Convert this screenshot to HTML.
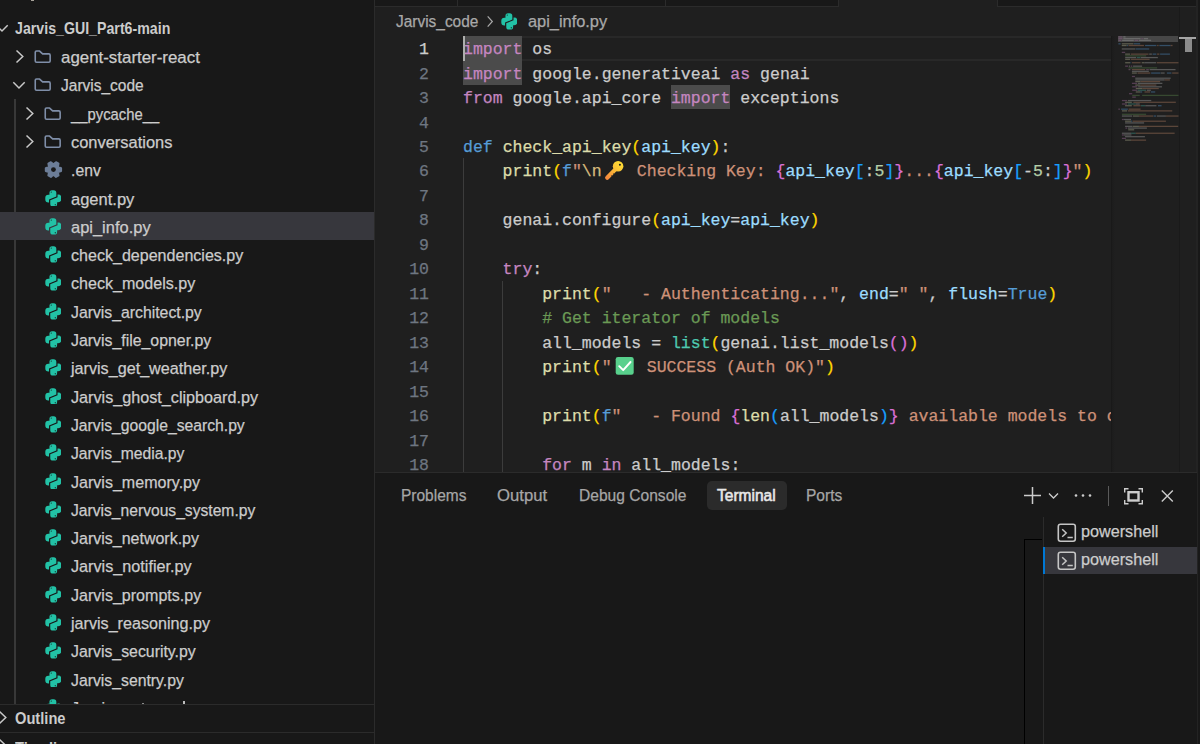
<!DOCTYPE html>
<html><head><meta charset="utf-8">
<style>
*{margin:0;padding:0;box-sizing:border-box}
html,body{width:1200px;height:744px;overflow:hidden;background:#181818}
body{position:relative;font-family:"Liberation Sans",sans-serif;color:#cccccc;-webkit-text-stroke:0.25px currentColor}
.abs{position:absolute}
#side{position:absolute;left:0;top:0;width:374px;height:744px;background:#181818;overflow:hidden}
.row{position:absolute;left:0;width:375px;height:28.3px}
.row.sel{background:#37373d}
.row .t{position:absolute;top:2px;transform-origin:0 0;line-height:28.3px;font-size:16.7px;white-space:nowrap;color:#cccccc}
.ic{position:absolute;display:block;line-height:0}
.py{width:16.7px;height:16.9px;display:block}
.fold{width:18px;height:15px;display:block}
.chev{width:10px;height:16px;display:block}
.chevd{width:16px;height:10px;display:block}
#ed{position:absolute;left:375px;top:0;width:822px;height:472px;background:#1f1f1f;overflow:hidden}
.cl{position:absolute;left:88px;height:24.46px;line-height:24.46px;font-family:"Liberation Mono",monospace;font-size:16.5px;white-space:pre;padding-top:2.2px}
.ln{position:absolute;left:0;width:54px;text-align:right;height:24.46px;line-height:24.46px;font-family:"Liberation Mono",monospace;font-size:16.5px;color:#6e7681;padding-top:2.2px}
.ln.act{color:#cccccc}
.emo{display:inline-block;width:25.3px;height:20px;vertical-align:-4px;position:relative}
.emo svg{display:none}
#panel{position:absolute;left:375px;top:472px;width:822px;height:272px;background:#181818;border-top:1px solid #2b2b2b}
.ptab{position:absolute;top:0;line-height:28px;font-size:16.7px;color:#a6a6a6;white-space:nowrap;transform-origin:0 0}
.mm{position:absolute;height:1.45px;opacity:0.55}
.ti{position:absolute;line-height:0}
</style></head><body>
<div id="side">
  <div class="abs" style="left:30.8px;top:0;width:3.5px;height:1.2px;background:#a8a39a"></div>
  <div class="row" style="top:14px">
    <span class="ic" style="left:-4.7px;top:10px"><svg class="chevd" viewBox="0 0 16 10"><path d="M1.3 1.3L7 7L12.7 1.3" fill="none" stroke="#c8c8c8" stroke-width="1.5"/></svg></span>
    <span class="t" style="left:14.5px;top:1px;font-weight:bold;-webkit-text-stroke:0;transform:scaleX(0.85)">Jarvis_GUI_Part6-main</span>
  </div>
  <div class="abs" style="left:14.4px;top:98.6px;width:1.4px;height:606px;background:#383838"></div>
<div class="row" style="top:42.00px"><span class="ic" style="left:15px;top:7px"><svg class="chev" viewBox="0 0 10 16"><path d="M1.5 1.5L7.8 7.5L1.5 13.5" fill="none" stroke="#c8c8c8" stroke-width="1.5"/></svg></span><span class="ic" style="left:34px;top:7px"><svg class="fold" viewBox="0 0 18 15"><path d="M1.25 3.3Q1.25 2.05 2.5 2.05H5.6L8.6 4.9H14.9Q16.15 4.9 16.15 6.15V12Q16.15 13.25 14.9 13.25H2.5Q1.25 13.25 1.25 12Z" fill="none" stroke="#7f8ea8" stroke-width="1.6" stroke-linejoin="round"/></svg></span><span class="t" style="left:61px;transform:scaleX(1.0116)">agent-starter-react</span></div>
<div class="row" style="top:70.30px"><span class="ic" style="left:11.5px;top:11px"><svg class="chevd" viewBox="0 0 16 10"><path d="M1.3 1.3L7 7L12.7 1.3" fill="none" stroke="#c8c8c8" stroke-width="1.5"/></svg></span><span class="ic" style="left:34px;top:7px"><svg class="fold" viewBox="0 0 18 15"><path d="M1.25 3.3Q1.25 2.05 2.5 2.05H5.6L8.6 4.9H14.9Q16.15 4.9 16.15 6.15V12Q16.15 13.25 14.9 13.25H2.5Q1.25 13.25 1.25 12Z" fill="none" stroke="#7f8ea8" stroke-width="1.6" stroke-linejoin="round"/></svg></span><span class="t" style="left:61px;transform:scaleX(0.9292)">Jarvis_code</span></div>
<div class="row" style="top:98.60px"><span class="ic" style="left:25px;top:7px"><svg class="chev" viewBox="0 0 10 16"><path d="M1.5 1.5L7.8 7.5L1.5 13.5" fill="none" stroke="#c8c8c8" stroke-width="1.5"/></svg></span><span class="ic" style="left:44px;top:7px"><svg class="fold" viewBox="0 0 18 15"><path d="M1.25 3.3Q1.25 2.05 2.5 2.05H5.6L8.6 4.9H14.9Q16.15 4.9 16.15 6.15V12Q16.15 13.25 14.9 13.25H2.5Q1.25 13.25 1.25 12Z" fill="none" stroke="#7f8ea8" stroke-width="1.6" stroke-linejoin="round"/></svg></span><span class="t" style="left:71px;transform:scaleX(0.888)">__pycache__</span></div>
<div class="row" style="top:126.90px"><span class="ic" style="left:25px;top:7px"><svg class="chev" viewBox="0 0 10 16"><path d="M1.5 1.5L7.8 7.5L1.5 13.5" fill="none" stroke="#c8c8c8" stroke-width="1.5"/></svg></span><span class="ic" style="left:44px;top:7px"><svg class="fold" viewBox="0 0 18 15"><path d="M1.25 3.3Q1.25 2.05 2.5 2.05H5.6L8.6 4.9H14.9Q16.15 4.9 16.15 6.15V12Q16.15 13.25 14.9 13.25H2.5Q1.25 13.25 1.25 12Z" fill="none" stroke="#7f8ea8" stroke-width="1.6" stroke-linejoin="round"/></svg></span><span class="t" style="left:71px;transform:scaleX(0.9845)">conversations</span></div>
<div class="row" style="top:155.20px"><span class="ic" style="left:44.8px;top:6px"><svg class="py" style="overflow:visible" viewBox="0 0 16.7 16.9"><path d="M16.20 10.11 L16.20 7.09 L13.04 5.95 L13.63 2.64 L11.02 1.13 L8.45 3.30 L5.88 1.13 L3.27 2.64 L3.86 5.95 L0.70 7.09 L0.70 10.11 L3.86 11.25 L3.27 14.56 L5.88 16.07 L8.45 13.90 L11.02 16.07 L13.63 14.56 L13.04 11.25Z" fill="#6c7d97" stroke="#6c7d97" stroke-width="1.8" stroke-linejoin="round"/><circle cx="8.45" cy="8.6" r="2.4" fill="#181818"/></svg></span><span class="t" style="left:71px;transform:scaleX(0.9438)">.env</span></div>
<div class="row" style="top:183.50px"><span class="ic" style="left:44.8px;top:6px"><svg class="py" viewBox="0 0 16.5 16.7"><path d="M4.4 2.9A2.6 2.6 0 0 1 7 0.3H8.6A2.6 2.6 0 0 1 11.2 2.9V6.5L4 9.5V12.3H3.3A3 3 0 0 1 0.3 9.3V7.6A3 3 0 0 1 3.3 4.6H4.4Z" fill="#22c2a6"/><path d="M4.4 2.9A2.6 2.6 0 0 1 7 0.3H8.6A2.6 2.6 0 0 1 11.2 2.9V6.5L4 9.5V12.3H3.3A3 3 0 0 1 0.3 9.3V7.6A3 3 0 0 1 3.3 4.6H4.4Z" fill="#22c2a6" transform="rotate(180 8.2 8.35)"/><circle cx="6.2" cy="2.1" r="0.65" fill="#181818" fill-opacity="0.8"/><circle cx="10.2" cy="14.6" r="0.65" fill="#181818" fill-opacity="0.8"/></svg></span><span class="t" style="left:71px;transform:scaleX(0.9892)">agent.py</span></div>
<div class="row sel" style="top:211.80px"><span class="ic" style="left:44.8px;top:6px"><svg class="py" viewBox="0 0 16.5 16.7"><path d="M4.4 2.9A2.6 2.6 0 0 1 7 0.3H8.6A2.6 2.6 0 0 1 11.2 2.9V6.5L4 9.5V12.3H3.3A3 3 0 0 1 0.3 9.3V7.6A3 3 0 0 1 3.3 4.6H4.4Z" fill="#22c2a6"/><path d="M4.4 2.9A2.6 2.6 0 0 1 7 0.3H8.6A2.6 2.6 0 0 1 11.2 2.9V6.5L4 9.5V12.3H3.3A3 3 0 0 1 0.3 9.3V7.6A3 3 0 0 1 3.3 4.6H4.4Z" fill="#22c2a6" transform="rotate(180 8.2 8.35)"/><circle cx="6.2" cy="2.1" r="0.65" fill="#181818" fill-opacity="0.8"/><circle cx="10.2" cy="14.6" r="0.65" fill="#181818" fill-opacity="0.8"/></svg></span><span class="t" style="left:71px;transform:scaleX(0.9864)">api_info.py</span></div>
<div class="row" style="top:240.10px"><span class="ic" style="left:44.8px;top:6px"><svg class="py" viewBox="0 0 16.5 16.7"><path d="M4.4 2.9A2.6 2.6 0 0 1 7 0.3H8.6A2.6 2.6 0 0 1 11.2 2.9V6.5L4 9.5V12.3H3.3A3 3 0 0 1 0.3 9.3V7.6A3 3 0 0 1 3.3 4.6H4.4Z" fill="#22c2a6"/><path d="M4.4 2.9A2.6 2.6 0 0 1 7 0.3H8.6A2.6 2.6 0 0 1 11.2 2.9V6.5L4 9.5V12.3H3.3A3 3 0 0 1 0.3 9.3V7.6A3 3 0 0 1 3.3 4.6H4.4Z" fill="#22c2a6" transform="rotate(180 8.2 8.35)"/><circle cx="6.2" cy="2.1" r="0.65" fill="#181818" fill-opacity="0.8"/><circle cx="10.2" cy="14.6" r="0.65" fill="#181818" fill-opacity="0.8"/></svg></span><span class="t" style="left:71px;transform:scaleX(0.9622)">check_dependencies.py</span></div>
<div class="row" style="top:268.40px"><span class="ic" style="left:44.8px;top:6px"><svg class="py" viewBox="0 0 16.5 16.7"><path d="M4.4 2.9A2.6 2.6 0 0 1 7 0.3H8.6A2.6 2.6 0 0 1 11.2 2.9V6.5L4 9.5V12.3H3.3A3 3 0 0 1 0.3 9.3V7.6A3 3 0 0 1 3.3 4.6H4.4Z" fill="#22c2a6"/><path d="M4.4 2.9A2.6 2.6 0 0 1 7 0.3H8.6A2.6 2.6 0 0 1 11.2 2.9V6.5L4 9.5V12.3H3.3A3 3 0 0 1 0.3 9.3V7.6A3 3 0 0 1 3.3 4.6H4.4Z" fill="#22c2a6" transform="rotate(180 8.2 8.35)"/><circle cx="6.2" cy="2.1" r="0.65" fill="#181818" fill-opacity="0.8"/><circle cx="10.2" cy="14.6" r="0.65" fill="#181818" fill-opacity="0.8"/></svg></span><span class="t" style="left:71px;transform:scaleX(0.9636)">check_models.py</span></div>
<div class="row" style="top:296.70px"><span class="ic" style="left:44.8px;top:6px"><svg class="py" viewBox="0 0 16.5 16.7"><path d="M4.4 2.9A2.6 2.6 0 0 1 7 0.3H8.6A2.6 2.6 0 0 1 11.2 2.9V6.5L4 9.5V12.3H3.3A3 3 0 0 1 0.3 9.3V7.6A3 3 0 0 1 3.3 4.6H4.4Z" fill="#22c2a6"/><path d="M4.4 2.9A2.6 2.6 0 0 1 7 0.3H8.6A2.6 2.6 0 0 1 11.2 2.9V6.5L4 9.5V12.3H3.3A3 3 0 0 1 0.3 9.3V7.6A3 3 0 0 1 3.3 4.6H4.4Z" fill="#22c2a6" transform="rotate(180 8.2 8.35)"/><circle cx="6.2" cy="2.1" r="0.65" fill="#181818" fill-opacity="0.8"/><circle cx="10.2" cy="14.6" r="0.65" fill="#181818" fill-opacity="0.8"/></svg></span><span class="t" style="left:71px;transform:scaleX(0.946)">Jarvis_architect.py</span></div>
<div class="row" style="top:325.00px"><span class="ic" style="left:44.8px;top:6px"><svg class="py" viewBox="0 0 16.5 16.7"><path d="M4.4 2.9A2.6 2.6 0 0 1 7 0.3H8.6A2.6 2.6 0 0 1 11.2 2.9V6.5L4 9.5V12.3H3.3A3 3 0 0 1 0.3 9.3V7.6A3 3 0 0 1 3.3 4.6H4.4Z" fill="#22c2a6"/><path d="M4.4 2.9A2.6 2.6 0 0 1 7 0.3H8.6A2.6 2.6 0 0 1 11.2 2.9V6.5L4 9.5V12.3H3.3A3 3 0 0 1 0.3 9.3V7.6A3 3 0 0 1 3.3 4.6H4.4Z" fill="#22c2a6" transform="rotate(180 8.2 8.35)"/><circle cx="6.2" cy="2.1" r="0.65" fill="#181818" fill-opacity="0.8"/><circle cx="10.2" cy="14.6" r="0.65" fill="#181818" fill-opacity="0.8"/></svg></span><span class="t" style="left:71px;transform:scaleX(0.9507)">Jarvis_file_opner.py</span></div>
<div class="row" style="top:353.30px"><span class="ic" style="left:44.8px;top:6px"><svg class="py" viewBox="0 0 16.5 16.7"><path d="M4.4 2.9A2.6 2.6 0 0 1 7 0.3H8.6A2.6 2.6 0 0 1 11.2 2.9V6.5L4 9.5V12.3H3.3A3 3 0 0 1 0.3 9.3V7.6A3 3 0 0 1 3.3 4.6H4.4Z" fill="#22c2a6"/><path d="M4.4 2.9A2.6 2.6 0 0 1 7 0.3H8.6A2.6 2.6 0 0 1 11.2 2.9V6.5L4 9.5V12.3H3.3A3 3 0 0 1 0.3 9.3V7.6A3 3 0 0 1 3.3 4.6H4.4Z" fill="#22c2a6" transform="rotate(180 8.2 8.35)"/><circle cx="6.2" cy="2.1" r="0.65" fill="#181818" fill-opacity="0.8"/><circle cx="10.2" cy="14.6" r="0.65" fill="#181818" fill-opacity="0.8"/></svg></span><span class="t" style="left:71px;transform:scaleX(0.9679)">jarvis_get_weather.py</span></div>
<div class="row" style="top:381.60px"><span class="ic" style="left:44.8px;top:6px"><svg class="py" viewBox="0 0 16.5 16.7"><path d="M4.4 2.9A2.6 2.6 0 0 1 7 0.3H8.6A2.6 2.6 0 0 1 11.2 2.9V6.5L4 9.5V12.3H3.3A3 3 0 0 1 0.3 9.3V7.6A3 3 0 0 1 3.3 4.6H4.4Z" fill="#22c2a6"/><path d="M4.4 2.9A2.6 2.6 0 0 1 7 0.3H8.6A2.6 2.6 0 0 1 11.2 2.9V6.5L4 9.5V12.3H3.3A3 3 0 0 1 0.3 9.3V7.6A3 3 0 0 1 3.3 4.6H4.4Z" fill="#22c2a6" transform="rotate(180 8.2 8.35)"/><circle cx="6.2" cy="2.1" r="0.65" fill="#181818" fill-opacity="0.8"/><circle cx="10.2" cy="14.6" r="0.65" fill="#181818" fill-opacity="0.8"/></svg></span><span class="t" style="left:71px;transform:scaleX(0.9694)">Jarvis_ghost_clipboard.py</span></div>
<div class="row" style="top:409.90px"><span class="ic" style="left:44.8px;top:6px"><svg class="py" viewBox="0 0 16.5 16.7"><path d="M4.4 2.9A2.6 2.6 0 0 1 7 0.3H8.6A2.6 2.6 0 0 1 11.2 2.9V6.5L4 9.5V12.3H3.3A3 3 0 0 1 0.3 9.3V7.6A3 3 0 0 1 3.3 4.6H4.4Z" fill="#22c2a6"/><path d="M4.4 2.9A2.6 2.6 0 0 1 7 0.3H8.6A2.6 2.6 0 0 1 11.2 2.9V6.5L4 9.5V12.3H3.3A3 3 0 0 1 0.3 9.3V7.6A3 3 0 0 1 3.3 4.6H4.4Z" fill="#22c2a6" transform="rotate(180 8.2 8.35)"/><circle cx="6.2" cy="2.1" r="0.65" fill="#181818" fill-opacity="0.8"/><circle cx="10.2" cy="14.6" r="0.65" fill="#181818" fill-opacity="0.8"/></svg></span><span class="t" style="left:71px;transform:scaleX(0.9411)">Jarvis_google_search.py</span></div>
<div class="row" style="top:438.20px"><span class="ic" style="left:44.8px;top:6px"><svg class="py" viewBox="0 0 16.5 16.7"><path d="M4.4 2.9A2.6 2.6 0 0 1 7 0.3H8.6A2.6 2.6 0 0 1 11.2 2.9V6.5L4 9.5V12.3H3.3A3 3 0 0 1 0.3 9.3V7.6A3 3 0 0 1 3.3 4.6H4.4Z" fill="#22c2a6"/><path d="M4.4 2.9A2.6 2.6 0 0 1 7 0.3H8.6A2.6 2.6 0 0 1 11.2 2.9V6.5L4 9.5V12.3H3.3A3 3 0 0 1 0.3 9.3V7.6A3 3 0 0 1 3.3 4.6H4.4Z" fill="#22c2a6" transform="rotate(180 8.2 8.35)"/><circle cx="6.2" cy="2.1" r="0.65" fill="#181818" fill-opacity="0.8"/><circle cx="10.2" cy="14.6" r="0.65" fill="#181818" fill-opacity="0.8"/></svg></span><span class="t" style="left:71px;transform:scaleX(0.9405)">Jarvis_media.py</span></div>
<div class="row" style="top:466.50px"><span class="ic" style="left:44.8px;top:6px"><svg class="py" viewBox="0 0 16.5 16.7"><path d="M4.4 2.9A2.6 2.6 0 0 1 7 0.3H8.6A2.6 2.6 0 0 1 11.2 2.9V6.5L4 9.5V12.3H3.3A3 3 0 0 1 0.3 9.3V7.6A3 3 0 0 1 3.3 4.6H4.4Z" fill="#22c2a6"/><path d="M4.4 2.9A2.6 2.6 0 0 1 7 0.3H8.6A2.6 2.6 0 0 1 11.2 2.9V6.5L4 9.5V12.3H3.3A3 3 0 0 1 0.3 9.3V7.6A3 3 0 0 1 3.3 4.6H4.4Z" fill="#22c2a6" transform="rotate(180 8.2 8.35)"/><circle cx="6.2" cy="2.1" r="0.65" fill="#181818" fill-opacity="0.8"/><circle cx="10.2" cy="14.6" r="0.65" fill="#181818" fill-opacity="0.8"/></svg></span><span class="t" style="left:71px;transform:scaleX(0.9622)">Jarvis_memory.py</span></div>
<div class="row" style="top:494.80px"><span class="ic" style="left:44.8px;top:6px"><svg class="py" viewBox="0 0 16.5 16.7"><path d="M4.4 2.9A2.6 2.6 0 0 1 7 0.3H8.6A2.6 2.6 0 0 1 11.2 2.9V6.5L4 9.5V12.3H3.3A3 3 0 0 1 0.3 9.3V7.6A3 3 0 0 1 3.3 4.6H4.4Z" fill="#22c2a6"/><path d="M4.4 2.9A2.6 2.6 0 0 1 7 0.3H8.6A2.6 2.6 0 0 1 11.2 2.9V6.5L4 9.5V12.3H3.3A3 3 0 0 1 0.3 9.3V7.6A3 3 0 0 1 3.3 4.6H4.4Z" fill="#22c2a6" transform="rotate(180 8.2 8.35)"/><circle cx="6.2" cy="2.1" r="0.65" fill="#181818" fill-opacity="0.8"/><circle cx="10.2" cy="14.6" r="0.65" fill="#181818" fill-opacity="0.8"/></svg></span><span class="t" style="left:71px;transform:scaleX(0.9371)">Jarvis_nervous_system.py</span></div>
<div class="row" style="top:523.10px"><span class="ic" style="left:44.8px;top:6px"><svg class="py" viewBox="0 0 16.5 16.7"><path d="M4.4 2.9A2.6 2.6 0 0 1 7 0.3H8.6A2.6 2.6 0 0 1 11.2 2.9V6.5L4 9.5V12.3H3.3A3 3 0 0 1 0.3 9.3V7.6A3 3 0 0 1 3.3 4.6H4.4Z" fill="#22c2a6"/><path d="M4.4 2.9A2.6 2.6 0 0 1 7 0.3H8.6A2.6 2.6 0 0 1 11.2 2.9V6.5L4 9.5V12.3H3.3A3 3 0 0 1 0.3 9.3V7.6A3 3 0 0 1 3.3 4.6H4.4Z" fill="#22c2a6" transform="rotate(180 8.2 8.35)"/><circle cx="6.2" cy="2.1" r="0.65" fill="#181818" fill-opacity="0.8"/><circle cx="10.2" cy="14.6" r="0.65" fill="#181818" fill-opacity="0.8"/></svg></span><span class="t" style="left:71px;transform:scaleX(0.9582)">Jarvis_network.py</span></div>
<div class="row" style="top:551.40px"><span class="ic" style="left:44.8px;top:6px"><svg class="py" viewBox="0 0 16.5 16.7"><path d="M4.4 2.9A2.6 2.6 0 0 1 7 0.3H8.6A2.6 2.6 0 0 1 11.2 2.9V6.5L4 9.5V12.3H3.3A3 3 0 0 1 0.3 9.3V7.6A3 3 0 0 1 3.3 4.6H4.4Z" fill="#22c2a6"/><path d="M4.4 2.9A2.6 2.6 0 0 1 7 0.3H8.6A2.6 2.6 0 0 1 11.2 2.9V6.5L4 9.5V12.3H3.3A3 3 0 0 1 0.3 9.3V7.6A3 3 0 0 1 3.3 4.6H4.4Z" fill="#22c2a6" transform="rotate(180 8.2 8.35)"/><circle cx="6.2" cy="2.1" r="0.65" fill="#181818" fill-opacity="0.8"/><circle cx="10.2" cy="14.6" r="0.65" fill="#181818" fill-opacity="0.8"/></svg></span><span class="t" style="left:71px;transform:scaleX(0.9704)">Jarvis_notifier.py</span></div>
<div class="row" style="top:579.70px"><span class="ic" style="left:44.8px;top:6px"><svg class="py" viewBox="0 0 16.5 16.7"><path d="M4.4 2.9A2.6 2.6 0 0 1 7 0.3H8.6A2.6 2.6 0 0 1 11.2 2.9V6.5L4 9.5V12.3H3.3A3 3 0 0 1 0.3 9.3V7.6A3 3 0 0 1 3.3 4.6H4.4Z" fill="#22c2a6"/><path d="M4.4 2.9A2.6 2.6 0 0 1 7 0.3H8.6A2.6 2.6 0 0 1 11.2 2.9V6.5L4 9.5V12.3H3.3A3 3 0 0 1 0.3 9.3V7.6A3 3 0 0 1 3.3 4.6H4.4Z" fill="#22c2a6" transform="rotate(180 8.2 8.35)"/><circle cx="6.2" cy="2.1" r="0.65" fill="#181818" fill-opacity="0.8"/><circle cx="10.2" cy="14.6" r="0.65" fill="#181818" fill-opacity="0.8"/></svg></span><span class="t" style="left:71px;transform:scaleX(0.9618)">Jarvis_prompts.py</span></div>
<div class="row" style="top:608.00px"><span class="ic" style="left:44.8px;top:6px"><svg class="py" viewBox="0 0 16.5 16.7"><path d="M4.4 2.9A2.6 2.6 0 0 1 7 0.3H8.6A2.6 2.6 0 0 1 11.2 2.9V6.5L4 9.5V12.3H3.3A3 3 0 0 1 0.3 9.3V7.6A3 3 0 0 1 3.3 4.6H4.4Z" fill="#22c2a6"/><path d="M4.4 2.9A2.6 2.6 0 0 1 7 0.3H8.6A2.6 2.6 0 0 1 11.2 2.9V6.5L4 9.5V12.3H3.3A3 3 0 0 1 0.3 9.3V7.6A3 3 0 0 1 3.3 4.6H4.4Z" fill="#22c2a6" transform="rotate(180 8.2 8.35)"/><circle cx="6.2" cy="2.1" r="0.65" fill="#181818" fill-opacity="0.8"/><circle cx="10.2" cy="14.6" r="0.65" fill="#181818" fill-opacity="0.8"/></svg></span><span class="t" style="left:71px;transform:scaleX(0.9667)">jarvis_reasoning.py</span></div>
<div class="row" style="top:636.30px"><span class="ic" style="left:44.8px;top:6px"><svg class="py" viewBox="0 0 16.5 16.7"><path d="M4.4 2.9A2.6 2.6 0 0 1 7 0.3H8.6A2.6 2.6 0 0 1 11.2 2.9V6.5L4 9.5V12.3H3.3A3 3 0 0 1 0.3 9.3V7.6A3 3 0 0 1 3.3 4.6H4.4Z" fill="#22c2a6"/><path d="M4.4 2.9A2.6 2.6 0 0 1 7 0.3H8.6A2.6 2.6 0 0 1 11.2 2.9V6.5L4 9.5V12.3H3.3A3 3 0 0 1 0.3 9.3V7.6A3 3 0 0 1 3.3 4.6H4.4Z" fill="#22c2a6" transform="rotate(180 8.2 8.35)"/><circle cx="6.2" cy="2.1" r="0.65" fill="#181818" fill-opacity="0.8"/><circle cx="10.2" cy="14.6" r="0.65" fill="#181818" fill-opacity="0.8"/></svg></span><span class="t" style="left:71px;transform:scaleX(0.9492)">Jarvis_security.py</span></div>
<div class="row" style="top:664.60px"><span class="ic" style="left:44.8px;top:6px"><svg class="py" viewBox="0 0 16.5 16.7"><path d="M4.4 2.9A2.6 2.6 0 0 1 7 0.3H8.6A2.6 2.6 0 0 1 11.2 2.9V6.5L4 9.5V12.3H3.3A3 3 0 0 1 0.3 9.3V7.6A3 3 0 0 1 3.3 4.6H4.4Z" fill="#22c2a6"/><path d="M4.4 2.9A2.6 2.6 0 0 1 7 0.3H8.6A2.6 2.6 0 0 1 11.2 2.9V6.5L4 9.5V12.3H3.3A3 3 0 0 1 0.3 9.3V7.6A3 3 0 0 1 3.3 4.6H4.4Z" fill="#22c2a6" transform="rotate(180 8.2 8.35)"/><circle cx="6.2" cy="2.1" r="0.65" fill="#181818" fill-opacity="0.8"/><circle cx="10.2" cy="14.6" r="0.65" fill="#181818" fill-opacity="0.8"/></svg></span><span class="t" style="left:71px;transform:scaleX(0.9458)">Jarvis_sentry.py</span></div>
<div class="row" style="top:692.90px"><span class="ic" style="left:44.8px;top:6px"><svg class="py" viewBox="0 0 16.5 16.7"><path d="M4.4 2.9A2.6 2.6 0 0 1 7 0.3H8.6A2.6 2.6 0 0 1 11.2 2.9V6.5L4 9.5V12.3H3.3A3 3 0 0 1 0.3 9.3V7.6A3 3 0 0 1 3.3 4.6H4.4Z" fill="#22c2a6"/><path d="M4.4 2.9A2.6 2.6 0 0 1 7 0.3H8.6A2.6 2.6 0 0 1 11.2 2.9V6.5L4 9.5V12.3H3.3A3 3 0 0 1 0.3 9.3V7.6A3 3 0 0 1 3.3 4.6H4.4Z" fill="#22c2a6" transform="rotate(180 8.2 8.35)"/><circle cx="6.2" cy="2.1" r="0.65" fill="#181818" fill-opacity="0.8"/><circle cx="10.2" cy="14.6" r="0.65" fill="#181818" fill-opacity="0.8"/></svg></span><span class="t" style="left:71px;transform:scaleX(0.97)">Jarvis</span></div>
  <div class="abs" style="left:141.5px;top:702.5px;width:2px;height:1.5px;background:#8a8a8a"></div>
  <div class="abs" style="left:183px;top:701px;width:2px;height:3px;background:#bdbdbd"></div>
  <div class="abs" style="left:0;top:704px;width:374px;height:1px;background:#2b2b2b"></div>
  <div class="abs" style="left:0;top:705px;width:374px;height:28px;background:#181818"></div>
  <div class="row" style="top:704.5px">
    <span class="ic" style="left:-2.5px;top:5.8px"><svg class="chev" viewBox="0 0 10 16"><path d="M1.5 1.5L7.8 7.5L1.5 13.5" fill="none" stroke="#c8c8c8" stroke-width="1.5"/></svg></span>
    <span class="t" style="left:15px;top:0.5px;font-weight:bold;-webkit-text-stroke:0;transform:scaleX(0.879)">Outline</span>
  </div>
  <div class="abs" style="left:0;top:732px;width:374px;height:1px;background:#2b2b2b"></div>
  <div class="row" style="top:732.5px">
    <span class="ic" style="left:-2.5px;top:5.8px"><svg class="chev" viewBox="0 0 10 16"><path d="M1.5 1.5L7.8 7.5L1.5 13.5" fill="none" stroke="#c8c8c8" stroke-width="1.5"/></svg></span>
    <span class="t" style="left:15px;font-weight:bold;-webkit-text-stroke:0;transform:scaleX(0.879)">Timeline</span>
  </div>
</div>
<div class="abs" style="left:374px;top:0;width:1px;height:744px;background:#2b2b2b"></div>

<div id="ed">
  <!-- tab strip -->
  <div class="abs" style="left:0;top:0;width:822px;height:6px;background:#181818"></div>
  <div class="abs" style="left:0;top:6px;width:464px;height:1px;background:#2b2b2b"></div>
  <div class="abs" style="left:622px;top:6px;width:200px;height:1px;background:#2b2b2b"></div>
  <div class="abs" style="left:82px;top:0;width:1px;height:6px;background:#2b2b2b"></div>
  <div class="abs" style="left:290px;top:0;width:1px;height:6px;background:#2b2b2b"></div>
  <div class="abs" style="left:463px;top:0;width:1px;height:7px;background:#2b2b2b"></div>
  <div class="abs" style="left:464px;top:0;width:158px;height:7px;background:#1f1f1f"></div>
  <div class="abs" style="left:622px;top:0;width:1px;height:7px;background:#2b2b2b"></div>
  <!-- breadcrumbs -->
  <div class="abs" style="left:20.5px;top:7px;line-height:29px;font-size:16.7px;color:#a9a9a9;white-space:nowrap;transform:scaleX(0.925);transform-origin:0 0">Jarvis_code</div>
  <span class="ic" style="left:111px;top:15px"><svg viewBox="0 0 8 14" width="8" height="13"><path d="M1.5 1.5L6.5 7L1.5 12.5" fill="none" stroke="#a9a9a9" stroke-width="1.3"/></svg></span>
  <span class="ic" style="left:125.5px;top:13px"><svg class="py" viewBox="0 0 16.5 16.7"><path d="M4.4 2.9A2.6 2.6 0 0 1 7 0.3H8.6A2.6 2.6 0 0 1 11.2 2.9V6.5L4 9.5V12.3H3.3A3 3 0 0 1 0.3 9.3V7.6A3 3 0 0 1 3.3 4.6H4.4Z" fill="#22c2a6"/><path d="M4.4 2.9A2.6 2.6 0 0 1 7 0.3H8.6A2.6 2.6 0 0 1 11.2 2.9V6.5L4 9.5V12.3H3.3A3 3 0 0 1 0.3 9.3V7.6A3 3 0 0 1 3.3 4.6H4.4Z" fill="#22c2a6" transform="rotate(180 8.2 8.35)"/><circle cx="6.2" cy="2.1" r="0.65" fill="#181818" fill-opacity="0.8"/><circle cx="10.2" cy="14.6" r="0.65" fill="#181818" fill-opacity="0.8"/></svg></span>
  <div class="abs" style="left:152.5px;top:7px;line-height:29px;font-size:16.7px;color:#a9a9a9;white-space:nowrap;transform:scaleX(0.98);transform-origin:0 0">api_info.py</div>
  <!-- current line -->
  <div class="abs" style="left:88px;top:36px;width:660px;height:24.5px;border:2.5px solid #282828;border-left:none"></div>
  <!-- selection highlights -->
  <div class="abs" style="left:88px;top:36px;width:59.4px;height:48.9px;background:#4b4b4b"></div>
  <div class="abs" style="left:295.8px;top:84.9px;width:59.4px;height:24.46px;background:#4b4b4b"></div>
  <!-- indent guides -->
  <div class="abs" style="left:88px;top:158.3px;width:1px;height:320px;background:#3c3c3c"></div>
  <div class="abs" style="left:127.2px;top:281px;width:1px;height:200px;background:#3c3c3c"></div>
<div class="ln act" style="top:36.00px">1</div>
<div class="ln" style="top:60.46px">2</div>
<div class="ln" style="top:84.92px">3</div>
<div class="ln" style="top:109.38px">4</div>
<div class="ln" style="top:133.84px">5</div>
<div class="ln" style="top:158.30px">6</div>
<div class="ln" style="top:182.76px">7</div>
<div class="ln" style="top:207.22px">8</div>
<div class="ln" style="top:231.68px">9</div>
<div class="ln" style="top:256.14px">10</div>
<div class="ln" style="top:280.60px">11</div>
<div class="ln" style="top:305.06px">12</div>
<div class="ln" style="top:329.52px">13</div>
<div class="ln" style="top:353.98px">14</div>
<div class="ln" style="top:378.44px">15</div>
<div class="ln" style="top:402.90px">16</div>
<div class="ln" style="top:427.36px">17</div>
<div class="ln" style="top:451.82px">18</div>
<div class="cl" style="top:36.00px"><span style="color:#c586c0">import</span><span style="color:#cccccc">&nbsp;os</span></div>
<div class="cl" style="top:60.46px"><span style="color:#c586c0">import</span><span style="color:#cccccc">&nbsp;google.generativeai&nbsp;</span><span style="color:#c586c0">as</span><span style="color:#cccccc">&nbsp;genai</span></div>
<div class="cl" style="top:84.92px"><span style="color:#c586c0">from</span><span style="color:#cccccc">&nbsp;google.api_core&nbsp;</span><span style="color:#c586c0">import</span><span style="color:#cccccc">&nbsp;exceptions</span></div>
<div class="cl" style="top:109.38px"></div>
<div class="cl" style="top:133.84px"><span style="color:#569cd6">def</span><span style="color:#cccccc">&nbsp;</span><span style="color:#dcdcaa">check_api_key</span><span style="color:#ffd700">(</span><span style="color:#9cdcfe">api_key</span><span style="color:#ffd700">)</span><span style="color:#cccccc">:</span></div>
<div class="cl" style="top:158.30px"><span style="color:#cccccc">&nbsp;&nbsp;&nbsp;&nbsp;</span><span style="color:#dcdcaa">print</span><span style="color:#ffd700">(</span><span style="color:#569cd6">f</span><span style="color:#ce9178">"</span><span style="color:#d7ba7d">\n</span><span class="emo"></span><span style="color:#ce9178">&nbsp;Checking&nbsp;Key:&nbsp;</span><span style="color:#da70d6">{</span><span style="color:#9cdcfe">api_key</span><span style="color:#179fff">[</span><span style="color:#cccccc">:</span><span style="color:#b5cea8">5</span><span style="color:#179fff">]</span><span style="color:#da70d6">}</span><span style="color:#ce9178">...</span><span style="color:#da70d6">{</span><span style="color:#9cdcfe">api_key</span><span style="color:#179fff">[</span><span style="color:#cccccc">-</span><span style="color:#b5cea8">5</span><span style="color:#cccccc">:</span><span style="color:#179fff">]</span><span style="color:#da70d6">}</span><span style="color:#ce9178">"</span><span style="color:#ffd700">)</span></div>
<div class="cl" style="top:182.76px"></div>
<div class="cl" style="top:207.22px"><span style="color:#cccccc">&nbsp;&nbsp;&nbsp;&nbsp;genai.configure</span><span style="color:#ffd700">(</span><span style="color:#9cdcfe">api_key</span><span style="color:#cccccc">=</span><span style="color:#9cdcfe">api_key</span><span style="color:#ffd700">)</span></div>
<div class="cl" style="top:231.68px"></div>
<div class="cl" style="top:256.14px"><span style="color:#cccccc">&nbsp;&nbsp;&nbsp;&nbsp;</span><span style="color:#c586c0">try</span><span style="color:#cccccc">:</span></div>
<div class="cl" style="top:280.60px"><span style="color:#cccccc">&nbsp;&nbsp;&nbsp;&nbsp;&nbsp;&nbsp;&nbsp;&nbsp;</span><span style="color:#dcdcaa">print</span><span style="color:#ffd700">(</span><span style="color:#ce9178">"&nbsp;&nbsp;&nbsp;-&nbsp;Authenticating..."</span><span style="color:#cccccc">,&nbsp;</span><span style="color:#9cdcfe">end</span><span style="color:#cccccc">=</span><span style="color:#ce9178">"&nbsp;"</span><span style="color:#cccccc">,&nbsp;</span><span style="color:#9cdcfe">flush</span><span style="color:#cccccc">=</span><span style="color:#569cd6">True</span><span style="color:#ffd700">)</span></div>
<div class="cl" style="top:305.06px"><span style="color:#cccccc">&nbsp;&nbsp;&nbsp;&nbsp;&nbsp;&nbsp;&nbsp;&nbsp;</span><span style="color:#6a9955">#&nbsp;Get&nbsp;iterator&nbsp;of&nbsp;models</span></div>
<div class="cl" style="top:329.52px"><span style="color:#cccccc">&nbsp;&nbsp;&nbsp;&nbsp;&nbsp;&nbsp;&nbsp;&nbsp;all_models&nbsp;=&nbsp;</span><span style="color:#4ec9b0">list</span><span style="color:#ffd700">(</span><span style="color:#cccccc">genai.list_models</span><span style="color:#da70d6">()</span><span style="color:#ffd700">)</span></div>
<div class="cl" style="top:353.98px"><span style="color:#cccccc">&nbsp;&nbsp;&nbsp;&nbsp;&nbsp;&nbsp;&nbsp;&nbsp;</span><span style="color:#dcdcaa">print</span><span style="color:#ffd700">(</span><span style="color:#ce9178">"</span><span class="emo"></span><span style="color:#ce9178">&nbsp;SUCCESS&nbsp;(Auth&nbsp;OK)"</span><span style="color:#ffd700">)</span></div>
<div class="cl" style="top:378.44px"></div>
<div class="cl" style="top:402.90px"><span style="color:#cccccc">&nbsp;&nbsp;&nbsp;&nbsp;&nbsp;&nbsp;&nbsp;&nbsp;</span><span style="color:#dcdcaa">print</span><span style="color:#ffd700">(</span><span style="color:#569cd6">f</span><span style="color:#ce9178">"&nbsp;&nbsp;&nbsp;-&nbsp;Found&nbsp;</span><span style="color:#da70d6">{</span><span style="color:#dcdcaa">len</span><span style="color:#179fff">(</span><span style="color:#cccccc">all_models</span><span style="color:#179fff">)</span><span style="color:#da70d6">}</span><span style="color:#ce9178">&nbsp;available&nbsp;models&nbsp;to&nbsp;check..."</span><span style="color:#ffd700">)</span></div>
<div class="cl" style="top:427.36px"></div>
<div class="cl" style="top:451.82px"><span style="color:#cccccc">&nbsp;&nbsp;&nbsp;&nbsp;&nbsp;&nbsp;&nbsp;&nbsp;</span><span style="color:#c586c0">for</span><span style="color:#cccccc">&nbsp;m&nbsp;</span><span style="color:#c586c0">in</span><span style="color:#cccccc">&nbsp;all_models:</span></div>
  <div class="abs" style="left:88px;top:36px;width:2.2px;height:24.6px;background:#aeafad"></div>
  <svg class="ti" style="left:226.6px;top:158.3px" width="26" height="24" viewBox="0 0 26 24"><defs><linearGradient id="kg2" gradientUnits="userSpaceOnUse" x1="5" y1="19.5" x2="18" y2="6"><stop offset="0" stop-color="#f68a3d"/><stop offset="0.6" stop-color="#fbbf35"/><stop offset="1" stop-color="#fdd835"/></linearGradient></defs><circle cx="16.1" cy="8.3" r="5.3" fill="url(#kg2)"/><path d="M14.6 10.1L5.2 19.7" stroke="url(#kg2)" stroke-width="4.2" stroke-linecap="round"/><path d="M9.2 17.6l1.2 1.1M11.2 15.6l1.1 1.1" stroke="#1f1f1f" stroke-width="0.9"/><circle cx="17.9" cy="6.7" r="1" fill="#1f1f1f"/></svg>
  <svg class="ti" style="left:236.5px;top:354px" width="26" height="24" viewBox="0 0 26 24"><rect x="3.7" y="3" width="18" height="17.8" rx="2.3" fill="#58d08c"/><path d="M7.2 12.2l4 4l7.3-8.2" fill="none" stroke="#fff" stroke-width="1.9" stroke-linecap="round" stroke-linejoin="round"/></svg>

  <!-- minimap bg/cover -->
  <div class="abs" style="left:736px;top:7px;width:86px;height:465px;background:#1f1f1f"></div>
  <div class="abs" style="left:735.5px;top:36px;width:1.5px;height:436px;background:#191919"></div>
  <div class="abs" style="left:737px;top:36px;width:3px;height:436px;background:linear-gradient(90deg,#1c1c1c,#1f1f1f)"></div>
  <div class="abs" style="left:803.5px;top:7px;width:1px;height:465px;background:#1a1a1a"></div>
  <div class="abs" style="left:743px;top:36px;width:60px;height:5.6px;background:#474747"></div>
<svg class="ti" style="left:735px;top:30px;opacity:0.5" width="70" height="115" viewBox="0 0 70 115"><rect x="8.39" y="6.30" width="4.14" height="1.25" fill="#8c5f88"/><rect x="13.28" y="6.30" width="2.26" height="1.25" fill="#8f8f8f"/><rect x="8.39" y="8.02" width="4.14" height="1.25" fill="#8c5f88"/><rect x="13.28" y="8.02" width="17.29" height="1.25" fill="#8f8f8f"/><rect x="31.32" y="8.02" width="1.50" height="1.25" fill="#8c5f88"/><rect x="33.58" y="8.02" width="4.51" height="1.25" fill="#8f8f8f"/><rect x="8.39" y="9.74" width="3.01" height="1.25" fill="#8c5f88"/><rect x="12.15" y="9.74" width="11.65" height="1.25" fill="#8f8f8f"/><rect x="24.56" y="9.74" width="3.76" height="1.25" fill="#8c5f88"/><rect x="29.07" y="9.74" width="12.03" height="1.25" fill="#8f8f8f"/><rect x="8.39" y="13.18" width="2.26" height="1.25" fill="#4a7fae"/><rect x="11.77" y="13.18" width="11.65" height="1.25" fill="#9b9b7f"/><rect x="23.80" y="13.18" width="6.39" height="1.25" fill="#4a7fae"/><rect x="11.77" y="14.90" width="4.89" height="1.25" fill="#9b9b7f"/><rect x="17.04" y="14.90" width="1.13" height="1.25" fill="#4a7fae"/><rect x="18.54" y="14.90" width="15.41" height="1.25" fill="#9a6e56"/><rect x="35.08" y="14.90" width="11.28" height="1.25" fill="#4a7fae"/><rect x="47.11" y="14.90" width="1.50" height="1.25" fill="#9a6e56"/><rect x="49.37" y="14.90" width="11.28" height="1.25" fill="#4a7fae"/><rect x="60.65" y="14.90" width="1.88" height="1.25" fill="#9a6e56"/><rect x="11.77" y="18.34" width="13.53" height="1.25" fill="#8f8f8f"/><rect x="25.68" y="18.34" width="13.53" height="1.25" fill="#4a7fae"/><rect x="11.77" y="21.78" width="3.38" height="1.25" fill="#8c5f88"/><rect x="15.16" y="23.50" width="4.89" height="1.25" fill="#9b9b7f"/><rect x="20.80" y="23.50" width="17.67" height="1.25" fill="#9a6e56"/><rect x="39.22" y="23.50" width="2.63" height="1.25" fill="#8f8f8f"/><rect x="42.60" y="23.50" width="3.76" height="1.25" fill="#4a7fae"/><rect x="47.11" y="23.50" width="2.26" height="1.25" fill="#9a6e56"/><rect x="50.12" y="23.50" width="9.77" height="1.25" fill="#4a7fae"/><rect x="15.16" y="25.22" width="21.05" height="1.25" fill="#4f7343"/><rect x="15.16" y="26.94" width="10.90" height="1.25" fill="#8f8f8f"/><rect x="26.81" y="26.94" width="3.76" height="1.25" fill="#3f8f80"/><rect x="30.95" y="26.94" width="16.92" height="1.25" fill="#8f8f8f"/><rect x="15.16" y="28.66" width="4.89" height="1.25" fill="#9b9b7f"/><rect x="20.80" y="28.66" width="18.80" height="1.25" fill="#9a6e56"/><rect x="15.16" y="32.10" width="4.89" height="1.25" fill="#9b9b7f"/><rect x="20.42" y="32.10" width="0.75" height="1.25" fill="#4a7fae"/><rect x="21.92" y="32.10" width="8.65" height="1.25" fill="#9a6e56"/><rect x="31.70" y="32.10" width="2.63" height="1.25" fill="#9b9b7f"/><rect x="34.33" y="32.10" width="11.65" height="1.25" fill="#8f8f8f"/><rect x="46.74" y="32.10" width="21.76" height="1.25" fill="#9a6e56"/><rect x="15.16" y="35.54" width="3.01" height="1.25" fill="#8c5f88"/><rect x="18.92" y="35.54" width="1.13" height="1.25" fill="#8f8f8f"/><rect x="20.80" y="35.54" width="1.50" height="1.25" fill="#8c5f88"/><rect x="23.05" y="35.54" width="9.02" height="1.25" fill="#8f8f8f"/><rect x="18.54" y="37.26" width="28.57" height="1.25" fill="#4f7343"/><rect x="18.54" y="38.98" width="1.88" height="1.25" fill="#8c5f88"/><rect x="21.92" y="38.98" width="13.16" height="1.25" fill="#9a6e56"/><rect x="36.21" y="38.98" width="2.63" height="1.25" fill="#8c5f88"/><rect x="39.59" y="38.98" width="25.94" height="1.25" fill="#8f8f8f"/><rect x="21.92" y="40.70" width="16.92" height="1.25" fill="#8f8f8f"/><rect x="21.92" y="42.42" width="4.89" height="1.25" fill="#9b9b7f"/><rect x="27.56" y="42.42" width="12.78" height="1.25" fill="#9a6e56"/><rect x="41.10" y="42.42" width="9.40" height="1.25" fill="#4a7fae"/><rect x="50.87" y="42.42" width="3.76" height="1.25" fill="#8f8f8f"/><rect x="56.89" y="42.42" width="4.51" height="1.25" fill="#4a7fae"/><rect x="62.15" y="42.42" width="6.35" height="1.25" fill="#9a6e56"/><rect x="21.92" y="45.86" width="3.01" height="1.25" fill="#8c5f88"/><rect x="25.31" y="47.58" width="35.34" height="1.25" fill="#8f8f8f"/><rect x="25.31" y="49.30" width="29.32" height="1.25" fill="#8f8f8f"/><rect x="54.63" y="49.30" width="5.26" height="1.25" fill="#9a6e56"/><rect x="25.31" y="51.02" width="5.26" height="1.25" fill="#9b9b7f"/><rect x="30.57" y="51.02" width="19.55" height="1.25" fill="#9a6e56"/><rect x="21.92" y="52.74" width="5.26" height="1.25" fill="#8c5f88"/><rect x="27.94" y="52.74" width="24.44" height="1.25" fill="#8f8f8f"/><rect x="25.31" y="54.46" width="5.26" height="1.25" fill="#9b9b7f"/><rect x="30.57" y="54.46" width="15.79" height="1.25" fill="#9a6e56"/><rect x="22.22" y="56.18" width="5.15" height="1.25" fill="#8c5f88"/><rect x="28.16" y="56.18" width="23.78" height="1.25" fill="#8f8f8f"/><rect x="25.78" y="57.90" width="6.34" height="1.25" fill="#9b9b7f"/><rect x="32.12" y="57.90" width="16.65" height="1.25" fill="#9a6e56"/><rect x="22.22" y="59.62" width="5.15" height="1.25" fill="#8c5f88"/><rect x="27.76" y="59.62" width="8.32" height="1.25" fill="#3f8f80"/><rect x="36.88" y="59.62" width="3.96" height="1.25" fill="#8f8f8f"/><rect x="25.78" y="61.34" width="4.76" height="1.25" fill="#9b9b7f"/><rect x="30.54" y="61.34" width="1.59" height="1.25" fill="#4a7fae"/><rect x="34.50" y="61.34" width="5.55" height="1.25" fill="#9a6e56"/><rect x="40.84" y="61.34" width="4.36" height="1.25" fill="#4a7fae"/><rect x="19.04" y="63.06" width="3.17" height="1.25" fill="#8c5f88"/><rect x="22.22" y="64.78" width="7.53" height="1.25" fill="#4f7343"/><rect x="32.12" y="64.78" width="36.38" height="1.25" fill="#4f7343"/><rect x="22.22" y="66.50" width="3.57" height="1.25" fill="#8c5f88"/><rect x="11.91" y="69.94" width="5.15" height="1.25" fill="#8c5f88"/><rect x="17.86" y="69.94" width="23.39" height="1.25" fill="#8f8f8f"/><rect x="15.08" y="71.66" width="6.74" height="1.25" fill="#9b9b7f"/><rect x="23.40" y="71.66" width="42.41" height="1.25" fill="#9a6e56"/><rect x="11.91" y="73.38" width="5.15" height="1.25" fill="#8c5f88"/><rect x="17.86" y="73.38" width="7.93" height="1.25" fill="#3f8f80"/><rect x="25.78" y="73.38" width="3.96" height="1.25" fill="#8f8f8f"/><rect x="15.08" y="75.10" width="6.74" height="1.25" fill="#9b9b7f"/><rect x="23.40" y="75.10" width="7.13" height="1.25" fill="#9a6e56"/><rect x="30.94" y="75.10" width="4.36" height="1.25" fill="#3f8f80"/><rect x="35.30" y="75.10" width="11.10" height="1.25" fill="#8f8f8f"/><rect x="47.98" y="75.10" width="3.57" height="1.25" fill="#4a7fae"/><rect x="8.34" y="78.54" width="1.59" height="1.25" fill="#8c5f88"/><rect x="11.12" y="78.54" width="6.74" height="1.25" fill="#4a7fae"/><rect x="18.65" y="78.54" width="11.89" height="1.25" fill="#9a6e56"/><rect x="11.91" y="80.26" width="5.15" height="1.25" fill="#9b9b7f"/><rect x="17.86" y="80.26" width="44.39" height="1.25" fill="#9a6e56"/><rect x="11.91" y="83.70" width="24.18" height="1.25" fill="#4f7343"/><rect x="11.91" y="85.42" width="10.31" height="1.25" fill="#8f8f8f"/><rect x="23.01" y="85.42" width="5.95" height="1.25" fill="#9b9b7f"/><rect x="28.95" y="85.42" width="14.27" height="1.25" fill="#9a6e56"/><rect x="43.62" y="85.42" width="2.38" height="1.25" fill="#4a7fae"/><rect x="46.79" y="85.42" width="9.12" height="1.25" fill="#8f8f8f"/><rect x="55.91" y="85.42" width="12.59" height="1.25" fill="#9a6e56"/><rect x="11.91" y="88.86" width="1.98" height="1.25" fill="#8c5f88"/><rect x="13.89" y="88.86" width="7.13" height="1.25" fill="#8f8f8f"/><rect x="15.08" y="90.58" width="5.95" height="1.25" fill="#9b9b7f"/><rect x="21.03" y="90.58" width="1.19" height="1.25" fill="#4a7fae"/><rect x="22.61" y="90.58" width="33.30" height="1.25" fill="#9a6e56"/><rect x="15.08" y="92.30" width="19.03" height="1.25" fill="#8f8f8f"/><rect x="15.08" y="95.74" width="7.53" height="1.25" fill="#8f8f8f"/><rect x="23.01" y="95.74" width="5.95" height="1.25" fill="#9b9b7f"/><rect x="28.95" y="95.74" width="39.24" height="1.25" fill="#9a6e56"/><rect x="15.48" y="97.46" width="1.59" height="1.25" fill="#8c5f88"/><rect x="17.86" y="97.46" width="19.03" height="1.25" fill="#8f8f8f"/><rect x="18.25" y="99.18" width="5.95" height="1.25" fill="#9b9b7f"/><rect x="11.91" y="102.62" width="9.12" height="1.25" fill="#8f8f8f"/><rect x="21.03" y="102.62" width="4.76" height="1.25" fill="#3f8f80"/><rect x="25.78" y="102.62" width="38.84" height="1.25" fill="#9a6e56"/><rect x="11.91" y="104.34" width="1.98" height="1.25" fill="#8c5f88"/><rect x="13.89" y="104.34" width="7.53" height="1.25" fill="#8f8f8f"/><rect x="15.08" y="106.06" width="19.82" height="1.25" fill="#8f8f8f"/><rect x="11.91" y="107.78" width="3.96" height="1.25" fill="#8c5f88"/><rect x="15.08" y="109.50" width="5.95" height="1.25" fill="#9b9b7f"/><rect x="21.03" y="109.50" width="15.06" height="1.25" fill="#9a6e56"/></svg>
  <div class="abs" style="left:804px;top:37px;width:18px;height:2px;background:#a5a5a5"></div>
  <div class="abs" style="left:810px;top:39px;width:7px;height:13px;background:#8c8c8c"></div>
</div>
<div class="abs" style="left:1196px;top:0;width:2px;height:744px;background:#232323"></div>

<div id="panel">
  <div class="ptab" style="left:26px;top:9px;transform:scaleX(0.929)">Problems</div>
  <div class="ptab" style="left:122px;top:9px">Output</div>
  <div class="ptab" style="left:204px;top:9px;transform:scaleX(0.934)">Debug Console</div>
  <div class="abs" style="left:331.5px;top:8px;width:80px;height:29px;background:#2b2b2b;border-radius:5px"></div>
  <div class="ptab" style="left:342px;top:9px;color:#e7e7e7;-webkit-text-stroke:0.6px #e7e7e7;transform:scaleX(0.93)">Terminal</div>
  <div class="ptab" style="left:431.4px;top:9px;transform:scaleX(0.93)">Ports</div>
  <!-- actions -->
  <svg class="ti" style="left:648px;top:12.5px" width="19" height="19" viewBox="0 0 19 19"><path d="M9.5 1v17M1 9.5h17" stroke="#cccccc" stroke-width="1.5"/></svg>
  <svg class="ti" style="left:673px;top:19px" width="11" height="8" viewBox="0 0 11 8"><path d="M1 1.5L5.5 6L10 1.5" fill="none" stroke="#cccccc" stroke-width="1.3"/></svg>
  <svg class="ti" style="left:699px;top:20px" width="18" height="5" viewBox="0 0 18 5"><circle cx="2" cy="2.5" r="1.3" fill="#cccccc"/><circle cx="9" cy="2.5" r="1.3" fill="#cccccc"/><circle cx="16" cy="2.5" r="1.3" fill="#cccccc"/></svg>
  <div class="abs" style="left:733px;top:12.5px;width:1px;height:20px;background:#5a5a5a"></div>
  <svg class="ti" style="left:749px;top:14.5px" width="19" height="17" viewBox="0 0 19 17"><path d="M0.7 4.5V0.7h3.8M14.5 0.7h3.8v3.8M18.3 12v3.8h-3.8M4.5 15.8H0.7V12" fill="none" stroke="#cccccc" stroke-width="1.4"/><rect x="4.5" y="4.2" width="10" height="8.3" fill="none" stroke="#cccccc" stroke-width="2.4"/></svg>
  <svg class="ti" style="left:785.5px;top:17px" width="13" height="12" viewBox="0 0 13 12"><path d="M0.8 0.5L11.8 11.5M11.8 0.5L0.8 11.5" stroke="#cccccc" stroke-width="1.4"/></svg>
  <!-- terminal list -->
  <div class="abs" style="left:667.8px;top:44px;width:1px;height:230px;background:#2b2b2b"></div>
  <div class="abs" style="left:649px;top:65.5px;width:1px;height:210px;background:#000"></div>
  <div class="abs" style="left:649px;top:65.5px;width:18px;height:1px;background:#000"></div>
  <svg class="ti" style="left:681.5px;top:49.5px" width="20" height="20" viewBox="0 0 20 20"><rect x="1.3" y="1.2" width="17" height="17" rx="2.2" fill="none" stroke="#c5c5c5" stroke-width="1.6"/><path d="M5.2 6.2l4 3.8l-4 3.8M10.5 14.5h5.3" fill="none" stroke="#c5c5c5" stroke-width="1.5"/></svg>
  <div class="ptab" style="left:705.5px;top:44.5px;color:#cccccc;transform:scaleX(0.97)">powershell</div>
  <div class="abs" style="left:668px;top:73.7px;width:154px;height:27.5px;background:#37373d"></div>
  <div class="abs" style="left:668px;top:73.7px;width:2.2px;height:27.5px;background:#0078d4"></div>
  <svg class="ti" style="left:681.5px;top:77.5px" width="20" height="20" viewBox="0 0 20 20"><rect x="1.3" y="1.2" width="17" height="17" rx="2.2" fill="none" stroke="#c5c5c5" stroke-width="1.6"/><path d="M5.2 6.2l4 3.8l-4 3.8M10.5 14.5h5.3" fill="none" stroke="#c5c5c5" stroke-width="1.5"/></svg>
  <div class="ptab" style="left:705.5px;top:72.5px;color:#cccccc;transform:scaleX(0.97)">powershell</div>
</div>
</body></html>
